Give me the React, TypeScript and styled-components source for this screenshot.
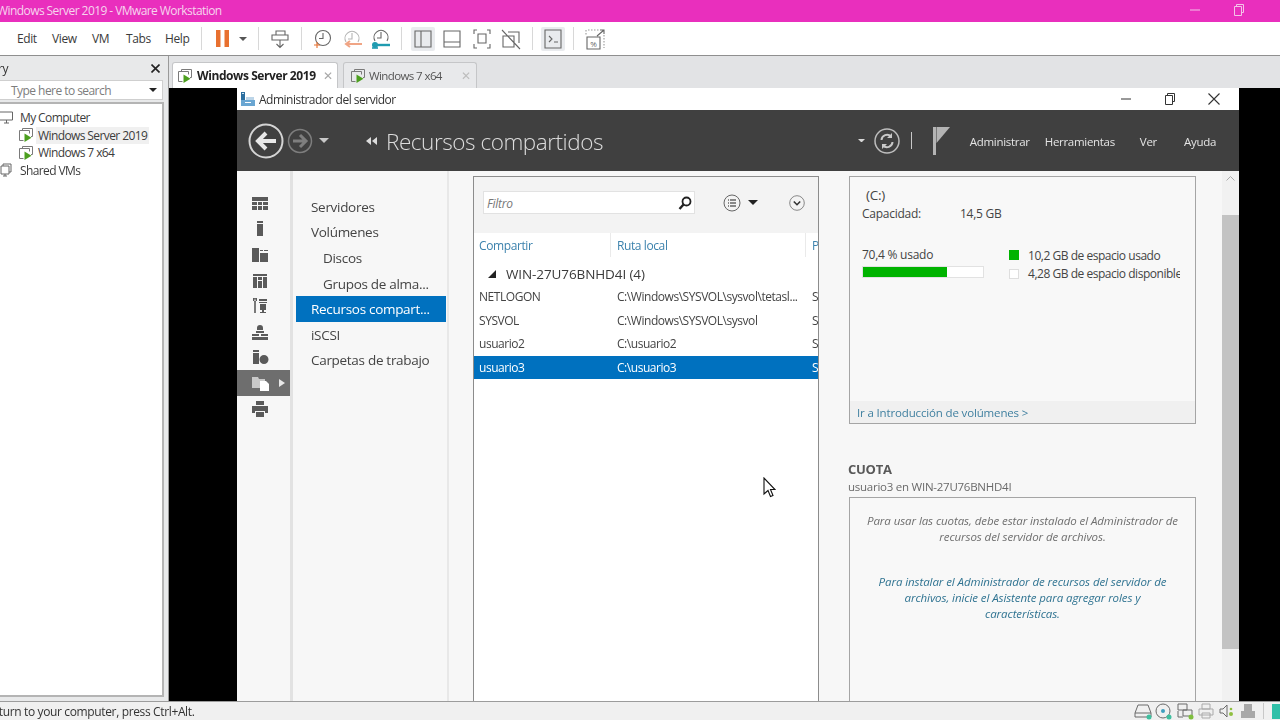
import React from "react";
import styled, { createGlobalStyle } from "styled-components";

const GlobalStyle = createGlobalStyle`
  html, body {
    margin: 0;
    padding: 0;
    width: 1280px;
    height: 720px;
    overflow: hidden;
    background: #000;
  }
  * {
    box-sizing: border-box;
  }
`;

const uiFont = `"Open Sans", "Noto Sans", sans-serif`;

const Screen = styled.div`
  position: relative;
  width: 1280px;
  height: 720px;
  display: flex;
  flex-direction: column;
  overflow: hidden;
  font-family: ${uiFont};
  letter-spacing: -0.25px;
  color: #333;
  filter: blur(0.3px);
`;

/* host window chrome */
const TitleBar = styled.div`
  height: 22px;
  flex-shrink: 0;
  background: #e92fbd;
  display: flex;
  align-items: center;
  color: #f6d5ee;
  font-size: 12px;
  letter-spacing: -0.57px;
  padding-bottom: 2px;
`;

const TitleText = styled.span`
  margin-left: -3px;
  flex: 1;
`;

const TitleControl = styled.span<{ $w: number }>`
  width: ${(p) => p.$w}px;
  display: flex;
  justify-content: center;
`;

const MenuBar = styled.div`
  height: 34px;
  flex-shrink: 0;
  background: #fff;
  border-bottom: 1px solid #8f8f8f;
  display: flex;
  align-items: center;
  padding-left: 17px;
  font-size: 12px;
  letter-spacing: -0.4px;
  color: #3a3a3a;
`;

const MenuItem = styled.span<{ $w: number }>`
  width: ${(p) => p.$w}px;
  flex-shrink: 0;
`;

const Sep = styled.span<{ $ml: number }>`
  width: 1px;
  height: 23px;
  background: #d8d8d8;
  margin-left: ${(p) => p.$ml}px;
  flex-shrink: 0;
`;

const Tool = styled.span<{ $ml: number; $w?: number; $on?: boolean }>`
  width: ${(p) => p.$w ?? 24}px;
  height: 24px;
  margin-left: ${(p) => p.$ml}px;
  flex-shrink: 0;
  display: flex;
  align-items: center;
  justify-content: center;
  border-radius: 2px;
  background: ${(p) => (p.$on ? "#e9ebee" : "transparent")};
`;

const Main = styled.div`
  flex: 1;
  min-height: 0;
  display: flex;
`;

const Library = styled.aside`
  width: 168px;
  flex-shrink: 0;
  background: #e8e9ea;
  display: flex;
  flex-direction: column;
`;

const LibraryHead = styled.div`
  height: 24px;
  display: flex;
  align-items: center;
  justify-content: space-between;
  padding-right: 8px;
  font-size: 12px;
`;

const LibraryTitle = styled.span`
  margin-left: -29px;
`;

const SearchBox = styled.div`
  height: 20px;
  width: 163px;
  background: #fff;
  border: 1px solid #cfcfcf;
  border-left: 0;
  display: flex;
  align-items: center;
  justify-content: space-between;
  padding: 0 5px 0 11px;
  font-size: 12px;
  letter-spacing: -0.55px;
  color: #7d7d7d;
`;

const Tree = styled.div`
  margin-top: 2px;
  width: 164px;
  height: 595px;
  background: #fff;
  border: 2px solid #b4b4b4;
  border-left: 0;
  padding-top: 5px;
`;

const TreeRow = styled.div<{ $child?: boolean }>`
  height: 17.5px;
  display: flex;
  align-items: center;
  gap: ${(p) => (p.$child ? 3 : 4)}px;
  padding-left: ${(p) => (p.$child ? 19 : 0)}px;
  font-size: 12px;
  letter-spacing: -0.6px;
  color: #3c3c3c;
`;

const TreeLabel = styled.span<{ $hover?: boolean }>`
  padding: 0 2px;
  line-height: 17px;
  background: ${(p) => (p.$hover ? "#f0f0f0" : "transparent")};
`;

const VmArea = styled.section`
  flex: 1;
  min-width: 0;
  display: flex;
  flex-direction: column;
  border-left: 1px solid #9a9a9a;
`;

const TabStrip = styled.div`
  height: 32px;
  flex-shrink: 0;
  background: #e2e3e5;
  display: flex;
  align-items: flex-end;
  padding-left: 3px;
  gap: 5px;
`;

const Tab = styled.div<{ $active?: boolean }>`
  width: ${(p) => (p.$active ? 166 : 134)}px;
  height: 26px;
  display: flex;
  align-items: center;
  padding: ${(p) => (p.$active ? "0 4px 0 5px" : "0 6px 0 7px")};
  gap: ${(p) => (p.$active ? 5 : 4)}px;
  font-size: ${(p) => (p.$active ? 12 : 11.5)}px;
  letter-spacing: ${(p) => (p.$active ? -0.42 : -0.6)}px;
  font-weight: ${(p) => (p.$active ? 700 : 400)};
  color: ${(p) => (p.$active ? "#222" : "#555")};
  background: ${(p) => (p.$active ? "#fff" : "#e8e9eb")};
  border: 1px solid #c5c6c8;
  border-bottom: 0;
  border-radius: 3px 3px 0 0;
`;

const TabLabel = styled.span`
  flex: 1;
  white-space: nowrap;
`;

const TabClose = styled.span<{ $active?: boolean }>`
  font-size: 12px;
  font-weight: 400;
  color: ${(p) => (p.$active ? "#a8a8a8" : "#bdbdbd")};
`;

const VmScreen = styled.div`
  flex: 1;
  min-height: 0;
  background: #000;
  padding: 0 41px 0 68px;
  display: flex;
`;

/* guest window */
const Guest = styled.div`
  flex: 1;
  min-width: 0;
  display: flex;
  flex-direction: column;
  background: #f7f7f7;
  overflow: hidden;
`;

const GuestTitle = styled.div`
  height: 22px;
  flex-shrink: 0;
  background: #fff;
  display: flex;
  align-items: center;
  padding: 0 3px;
  font-size: 12px;
  letter-spacing: -0.5px;
  color: #333;
`;

const GuestTitleText = styled.span`
  flex: 1;
  margin-left: 3px;
`;

const GuestControl = styled.span`
  width: 44px;
  display: flex;
  justify-content: center;
`;

const GuestHeader = styled.header`
  height: 61px;
  flex-shrink: 0;
  background: #404040;
  display: flex;
  align-items: center;
  padding-left: 11px;
  color: #e4e4e4;
  font-size: 11.5px;
  letter-spacing: -0.3px;
`;

const Spacer = styled.span<{ $w: number }>`
  width: ${(p) => p.$w}px;
  flex-shrink: 0;
`;

const HeaderDivider = styled.span`
  width: 1px;
  height: 17px;
  background: #c8c8c8;
`;

const PageTitle = styled.h1`
  margin: 2px 0 0 8px;
  flex: 1;
  font-size: 22.5px;
  font-weight: 300;
  letter-spacing: -0.45px;
  color: #dcdcdc;
  white-space: nowrap;
`;

const HeaderMenu = styled.span<{ $ml: number }>`
  margin-left: ${(p) => p.$ml}px;
  margin-top: 1px;
  flex-shrink: 0;
`;

const GuestBody = styled.div`
  flex: 1;
  min-height: 0;
  display: flex;
`;

const Rail = styled.nav`
  width: 53px;
  flex-shrink: 0;
  padding-top: 20px;
  display: flex;
  flex-direction: column;
`;

const RailItem = styled.div<{ $active?: boolean }>`
  height: 25.6px;
  display: flex;
  align-items: center;
  padding-left: 14px;
  background: ${(p) => (p.$active ? "#6e6e6e" : "transparent")};
`;

const RailArrow = styled.span`
  margin-left: 10px;
  width: 0;
  height: 0;
  border-left: 6px solid #e8e8e8;
  border-top: 4px solid transparent;
  border-bottom: 4px solid transparent;
`;

const NavPane = styled.nav`
  width: 159px;
  flex-shrink: 0;
  border-left: 3px solid #e2e2e2;
  border-right: 2px solid #e8e8e8;
  padding-top: 23px;
  font-size: 13.5px;
  letter-spacing: -0.3px;
  color: #444;
`;

const NavItem = styled.div<{ $sub?: boolean; $active?: boolean }>`
  height: 25.6px;
  width: 150px;
  margin-left: 3px;
  display: flex;
  align-items: center;
  padding-left: ${(p) => (p.$sub ? 27 : 15)}px;
  white-space: nowrap;
  color: ${(p) => (p.$active ? "#fff" : "#444")};
  background: ${(p) => (p.$active ? "#0071bf" : "transparent")};
`;

const Content = styled.div`
  flex: 1;
  min-width: 0;
  display: flex;
  padding: 5px 0 0 24px;
`;

const ListPanel = styled.section`
  width: 346px;
  flex-shrink: 0;
  background: #fff;
  border: 1px solid #8c8c8c;
  border-bottom: 0;
  overflow: hidden;
  display: flex;
  flex-direction: column;
`;

const ListToolbar = styled.div`
  height: 56px;
  flex-shrink: 0;
  background: #f3f3f3;
  display: flex;
  padding: 14px 0 0 9px;
`;

const FilterBox = styled.div`
  width: 212px;
  height: 23px;
  background: #fff;
  border: 1px solid #e2e2e2;
  display: flex;
  align-items: center;
  justify-content: space-between;
  padding: 1px 1px 0 3px;
  font-size: 12px;
  font-style: italic;
  color: #777;
`;

const ToolbarIcons = styled.div`
  display: flex;
  align-items: center;
  height: 23px;
  margin-left: 28px;
  gap: 7px;
`;

const Columns = styled.div`
  display: grid;
  grid-template-columns: 136px 195px 20px;
  width: 352px;
  height: 24px;
  align-items: center;
  font-size: 12px;
  letter-spacing: -0.4px;
  color: #3c82ad;
`;

const ColumnHead = styled.span<{ $line?: boolean }>`
  height: 100%;
  display: flex;
  align-items: center;
  padding-left: ${(p) => (p.$line ? 7 : 5)}px;
  white-space: nowrap;
  box-shadow: ${(p) => (p.$line ? "inset 1px 0 0 #eaeaea" : "none")};
`;

const GroupRow = styled.div`
  height: 22px;
  margin-top: 6px;
  flex-shrink: 0;
  display: flex;
  align-items: center;
  padding-left: 14px;
  gap: 10px;
  font-size: 13.5px;
  letter-spacing: -0.1px;
  color: #3a3a3a;
`;

const ShareRow = styled.div<{ $active?: boolean }>`
  display: grid;
  grid-template-columns: 136px 195px 20px;
  width: 345px;
  height: 23.6px;
  flex-shrink: 0;
  align-items: center;
  font-size: 12px;
  letter-spacing: -0.45px;
  white-space: nowrap;
  overflow: hidden;
  color: ${(p) => (p.$active ? "#fff" : "#444")};
  background: ${(p) => (p.$active ? "#0071bf" : "transparent")};
`;

const ShareCell = styled.span<{ $first?: boolean }>`
  padding-left: ${(p) => (p.$first ? 5 : 7)}px;
  overflow: hidden;
`;

const SideColumn = styled.div`
  width: 347px;
  margin-left: 30px;
  flex-shrink: 0;
  display: flex;
  flex-direction: column;
`;

const Card = styled.section`
  height: 248px;
  flex-shrink: 0;
  border: 1px solid #a5a5a5;
  background: #f8f8f8;
  display: flex;
  flex-direction: column;
  font-size: 12px;
  color: #444;
`;

const CardBody = styled.div`
  flex: 1;
  padding: 9px 12px 0;
`;

const DriveName = styled.div`
  font-size: 13.5px;
  line-height: 18px;
  padding-left: 4px;
`;

const CapacityRow = styled.div`
  display: flex;
  line-height: 18px;
  margin-top: 1px;
`;

const CapacityLabel = styled.span`
  width: 98px;
`;

const Usage = styled.div`
  display: flex;
  margin-top: 23px;
`;

const UsageLeft = styled.div`
  width: 147px;
`;

const UsageText = styled.div`
  line-height: 17px;
`;

const UsageTrack = styled.div`
  width: 122px;
  height: 12px;
  margin-top: 3px;
  background: #fff;
  border: 1px solid #e2e2e2;
`;

const UsageFill = styled.div`
  height: 100%;
  background: #00b300;
`;

const Legend = styled.div`
  width: 171px;
  overflow: hidden;
`;

const LegendRow = styled.div`
  height: 18.5px;
  display: flex;
  align-items: center;
  gap: 9px;
  letter-spacing: -0.47px;
  white-space: nowrap;
`;

const Swatch = styled.span<{ $fill?: boolean }>`
  width: 10px;
  height: 10px;
  flex-shrink: 0;
  background: ${(p) => (p.$fill ? "#00b300" : "#fff")};
  border: 1px solid ${(p) => (p.$fill ? "#00b300" : "#dedede")};
`;

const CardFooter = styled.div`
  height: 22px;
  flex-shrink: 0;
  background: #f0f0f0;
  display: flex;
  align-items: center;
  padding-left: 7px;
  font-size: 11.5px;
  letter-spacing: -0.15px;
  color: #3f7f9f;
`;

const QuotaHead = styled.h2`
  margin: 36px 0 0 -1px;
  font-size: 13px;
  line-height: 18px;
  font-weight: 700;
  color: #595959;
`;

const QuotaSub = styled.div`
  margin-left: -1px;
  font-size: 11.5px;
  line-height: 17px;
  color: #6a6a6a;
`;

const QuotaCard = styled.section`
  flex: 1;
  margin-top: 2px;
  border: 1px solid #a5a5a5;
  border-bottom: 0;
  background: #f8f8f8;
  padding-top: 15px;
  text-align: center;
  font-size: 11.5px;
  font-style: italic;
  letter-spacing: -0.08px;
  line-height: 16px;
`;

const QuotaNote = styled.p`
  margin: 0;
  color: #6f6f6f;
`;

const QuotaLink = styled.p`
  margin: 29px 0 0;
  color: #2f7391;
`;

const Scrollbar = styled.div`
  width: 17px;
  margin-left: 26px;
  flex-shrink: 0;
  margin-top: -5px;
  background: #f1f1f1;
  display: flex;
  flex-direction: column;
  align-items: center;
  padding-top: 5px;
`;

const ScrollThumb = styled.div`
  width: 17px;
  height: 434px;
  margin-top: 34px;
  background: #c3c3c3;
`;

const StatusBar = styled.footer`
  height: 19px;
  flex-shrink: 0;
  background: #f0f0f0;
  border-top: 1px solid #9c9c9c;
  display: flex;
  align-items: center;
  font-size: 12px;
  letter-spacing: -0.36px;
  color: #333;
`;

const StatusText = styled.span`
  flex: 1;
  margin: 1px 0 0 -28px;
  white-space: nowrap;
`;

const StatusDivider = styled.span`
  width: 1px;
  height: 16px;
  background: #c8c8c8;
  margin: 0 8px 0 5px;
`;

const StatusChip = styled.span`
  width: 8px;
  height: 15px;
  background: #30c0a8;
`;

const Cursor = styled.svg`
  position: absolute;
  left: 763px;
  top: 477px;
`;

/* icons */
const Ico = ({ children }: { children: React.ReactNode }) => (
  <svg width="24" height="24" viewBox="0 0 24 24" fill="none" stroke="#666" strokeWidth="1.1">
    {children}
  </svg>
);

const VmIcon = () => (
  <svg width="14" height="14" viewBox="0 0 14 14" fill="none" style={{ flexShrink: 0 }}>
    <path d="M3.5 2.5V.5h10v8H12" stroke="#7a7a7a" />
    <path d="M4.5 12.5h-4v-10h10v3" stroke="#7a7a7a" />
    <path d="M5.5 5.5v8.5l7-4.2z" fill="#4c9f1f" />
  </svg>
);

const Caret = ({ color = "#555", size = 4 }: { color?: string; size?: number }) => (
  <svg width={size * 2} height={size} viewBox="0 0 8 4">
    <path d="M0 0h8L4 4z" fill={color} />
  </svg>
);

const RailGlyph = ({ d }: { d: string }) => (
  <svg width="18" height="18" viewBox="0 0 18 18">
    <path d={d} fill="#5a5a5a" fillRule="evenodd" />
  </svg>
);

const railIcons = [
  "M1 2h16v4H1zM1 7h5v3H1zM7 7h4v3H7zM12 7h5v3h-5zM1 11h5v4H1zM7 11h4v4H7zM12 11h5v4h-5z",
  "M6 1h6v2H6zM6 4h6v12H6z",
  "M1 2h7v14H1zM9 4h3v1H9zM13 4h4v1h-4zM9 7h8v9H9z",
  "M2 2h14v2H2zM2 5h4v11H2zM12 5h4v11h-4zM7 5h4v3H7zM7 9h4v7H7z",
  "M4 1l1 4h-.2v11H3.2V5H3zM2 1v3h4V1zM8 2h8v2H8zM8 5h8v1H8zM9 7h6v6H9zM11 13h2v2h2v1H9v-1h2z",
  "M6 5a3 3 0 0 1 6 0v2H6zM5 8h8v2H5zM1 11h7v2H1zM10 11h7v2h-7zM1 14h16v3H1z",
  "M2 2h6v2H2zM2 5h6v11H2zM13 7a4.5 4.5 0 1 1 0 9 4.5 4.5 0 0 1 0-9z",
  "",
  "M5 1h8v4H5zM1 6h16v7h-3v-2H4v2H1zM5 12h8v5H5z",
];

const NavBack = () => (
  <svg width="36" height="36" viewBox="0 0 36 36">
    <circle cx="18" cy="18" r="16.5" fill="none" stroke="#d4d4d4" strokeWidth="2" />
    <path d="M28 18H11M18 10l-8 8 8 8" fill="none" stroke="#e8e8e8" strokeWidth="4" />
  </svg>
);

const NavForward = () => (
  <svg width="26" height="26" viewBox="0 0 26 26">
    <circle cx="13" cy="13" r="11.5" fill="none" stroke="#7e7e7e" strokeWidth="1.5" />
    <path d="M6 13h13M13 7l6 6-6 6" fill="none" stroke="#7e7e7e" strokeWidth="3" />
  </svg>
);

const Refresh = () => (
  <svg width="26" height="26" viewBox="0 0 26 26">
    <circle cx="13" cy="13" r="12" fill="none" stroke="#bdbdbd" strokeWidth="1.5" />
    <path
      d="M7.5 12a5.5 5.5 0 0 1 9.5-3.5M18.5 14a5.5 5.5 0 0 1-9.5 3.5"
      fill="none"
      stroke="#c9c9c9"
      strokeWidth="2"
    />
    <path d="M18 5v5h-5zM8 21v-5h5z" fill="#c9c9c9" />
  </svg>
);

const Flag = () => (
  <svg width="17" height="29" viewBox="0 0 17 29">
    <path d="M0 1h3v28H0z" fill="#b4b4b4" />
    <path d="M3.5 1H17L3.5 17z" fill="#b4b4b4" />
  </svg>
);

const ServerManagerIcon = () => (
  <svg width="16" height="16" viewBox="0 0 16 16">
    <path d="M1 1h4v8H1z" fill="#2d6f9f" />
    <path d="M2 2h2v1H2z" fill="#cfe3f2" />
    <path d="M1 9h14v6H1z" fill="#6aa6d2" />
    <path d="M6 6h8v3H6z" fill="#bcd5e8" />
    <path d="M5 11h6v1H5z" fill="#fff" />
  </svg>
);

const Restore = ({ color }: { color: string }) => (
  <svg width="12" height="12" viewBox="0 0 12 12" fill="none" stroke={color}>
    <path d="M3.5 2.5V.5h7v8h-2" />
    <path d="M1.5 2.5h7v9h-7z" />
  </svg>
);

const Cross = () => (
  <svg width="12" height="12" viewBox="0 0 12 12" stroke="#333" strokeWidth="1.1">
    <path d="M.5.5l11 11M11.5.5l-11 11" />
  </svg>
);

const Dash = ({ color }: { color: string }) => (
  <svg width="10" height="2" viewBox="0 0 10 2">
    <path d="M0 1h10" stroke={color} strokeWidth="1" />
  </svg>
);

const Magnifier = () => (
  <svg width="16" height="16" viewBox="0 0 16 16" fill="none" stroke="#222" strokeWidth="1.8">
    <circle cx="9.5" cy="6.5" r="4" />
    <path d="M6.5 9.5L2.5 14" strokeWidth="2.4" />
  </svg>
);

const ListOptions = () => (
  <svg width="18" height="18" viewBox="0 0 18 18" fill="none" stroke="#666">
    <circle cx="9" cy="9" r="8" />
    <path d="M7 6h6M7 9h6M7 12h6M5 6h1M5 9h1M5 12h1" strokeWidth="1.4" />
  </svg>
);

const Expand = () => (
  <svg width="16" height="16" viewBox="0 0 16 16" fill="none">
    <circle cx="8" cy="8" r="7.3" stroke="#888" />
    <path d="M4.8 6.5L8 9.7l3.2-3.2" stroke="#333" strokeWidth="1.6" />
  </svg>
);

const StatusIcon = ({ children }: { children: React.ReactNode }) => (
  <svg width="20" height="18" viewBox="0 0 20 18" fill="none" stroke="#6a6a6a" style={{ marginLeft: 1 }}>
    {children}
  </svg>
);

const shares = [
  { name: "NETLOGON", path: "C:\\Windows\\SYSVOL\\sysvol\\tetasl...", active: false },
  { name: "SYSVOL", path: "C:\\Windows\\SYSVOL\\sysvol", active: false },
  { name: "usuario2", path: "C:\\usuario2", active: false },
  { name: "usuario3", path: "C:\\usuario3", active: true },
];

const navItems = [
  { label: "Servidores" },
  { label: "Volúmenes" },
  { label: "Discos", sub: true },
  { label: "Grupos de alma...", sub: true },
  { label: "Recursos compart...", active: true },
  { label: "iSCSI" },
  { label: "Carpetas de trabajo" },
];

export default function App() {
  return (
    <Screen>
      <GlobalStyle />
      <TitleBar>
        <TitleText>Windows Server 2019 - VMware Workstation</TitleText>
        <TitleControl $w={44}>
          <Dash color="#f3c4e8" />
        </TitleControl>
        <TitleControl $w={44}>
          <Restore color="#f3c4e8" />
        </TitleControl>
        <TitleControl $w={19} />
      </TitleBar>

      <MenuBar>
        <MenuItem $w={35}>Edit</MenuItem>
        <MenuItem $w={40}>View</MenuItem>
        <MenuItem $w={34}>VM</MenuItem>
        <MenuItem $w={39}>Tabs</MenuItem>
        <MenuItem $w={36}>Help</MenuItem>
        <Sep $ml={0} />
        <Tool $ml={8}>
          <svg width="13" height="17" viewBox="0 0 13 17">
            <path d="M0 0h4.5v17H0zM8.5 0H13v17H8.5z" fill="#e8702f" />
          </svg>
        </Tool>
        <Tool $ml={4} $w={10}>
          <Caret />
        </Tool>
        <Sep $ml={10} />
        <Tool $ml={9}>
          <Ico>
            <path d="M8 4h9v4H8zM4 8h16v5H4zM12 13v7M8.5 17l3.5 3.5 3.5-3.5" />
          </Ico>
        </Tool>
        <Sep $ml={9} />
        <Tool $ml={8}>
          <Ico>
            <circle cx="13" cy="11" r="7.5" />
            <path d="M13 6v5.5H9" />
            <path d="M7 15v6M4 18h6" stroke="#e8702f" />
          </Ico>
        </Tool>
        <Tool $ml={6}>
          <Ico>
            <path d="M6 15a7 7 0 1 1 12 0" stroke="#b5b5b5" />
            <path d="M12 6v6H8" stroke="#b5b5b5" />
            <path d="M22 17H6M10 14l-4 3 4 3" stroke="#f0a585" strokeWidth="2" />
          </Ico>
        </Tool>
        <Tool $ml={5}>
          <Ico>
            <path d="M6 14a7 7 0 1 1 12 0" />
            <path d="M12 5v6H8" />
            <path d="M8 18h13" stroke="#1f9bb0" strokeWidth="2.4" />
            <circle cx="6" cy="18" r="3" fill="#1f9bb0" stroke="none" />
            <path d="M3 21h6" stroke="#1f9bb0" strokeWidth="1.6" />
          </Ico>
        </Tool>
        <Sep $ml={8} />
        <Tool $ml={9} $on>
          <Ico>
            <path d="M4 4h16v16H4zM10 4v16" />
          </Ico>
        </Tool>
        <Tool $ml={5}>
          <Ico>
            <path d="M4 4h16v16H4zM4 15h16" />
          </Ico>
        </Tool>
        <Tool $ml={6}>
          <Ico>
            <path d="M8 7h8v9H8zM7 3H4v4M17 3h3v4M7 21H4v-4M17 21h3v-4" />
          </Ico>
        </Tool>
        <Tool $ml={5}>
          <Ico>
            <path d="M9 5h11v11M4 9v11h11V9zM3 3l18 19" />
          </Ico>
        </Tool>
        <Sep $ml={9} />
        <Tool $ml={8} $on>
          <Ico>
            <path d="M4 3h16v18H4zM8 9l3 3-3 3M13 15h4" />
          </Ico>
        </Tool>
        <Sep $ml={8} />
        <Tool $ml={9}>
          <Ico>
            <path d="M5 3h11M21 8v13M3 3v5" strokeDasharray="1.5 1.5" stroke="#999" />
            <path d="M4 10h13v12H4zM14 9l7-6M17 3h4v4" />
            <text x="10.5" y="19.5" fontSize="8" textAnchor="middle" fill="#666" stroke="none" letterSpacing="0">
              %
            </text>
          </Ico>
        </Tool>
      </MenuBar>

      <Main>
        <Library>
          <LibraryHead>
            <LibraryTitle>Library</LibraryTitle>
            <svg width="9" height="9" viewBox="0 0 9 9" stroke="#222" strokeWidth="1.6">
              <path d="M.5.5l8 8M8.5.5l-8 8" />
            </svg>
          </LibraryHead>
          <SearchBox>
            <span>Type here to search</span>
            <Caret color="#222" />
          </SearchBox>
          <Tree>
            <TreeRow>
              <svg width="15" height="13" viewBox="0 0 15 13" fill="none" stroke="#666" style={{ marginLeft: -1 }}>
                <path d="M.5 1h13v8H.5zM5 12h5M7.5 9v3" />
              </svg>
              <TreeLabel>My Computer</TreeLabel>
            </TreeRow>
            <TreeRow $child>
              <VmIcon />
              <TreeLabel $hover>Windows Server 2019</TreeLabel>
            </TreeRow>
            <TreeRow $child>
              <VmIcon />
              <TreeLabel>Windows 7 x64</TreeLabel>
            </TreeRow>
            <TreeRow>
              <svg width="14" height="14" viewBox="0 0 14 14" fill="none" stroke="#666">
                <path d="M3 3V1h8v8H9M1 3h8v8H1zM3 13h4M5 11v2" />
              </svg>
              <TreeLabel>Shared VMs</TreeLabel>
            </TreeRow>
          </Tree>
        </Library>

        <VmArea>
          <TabStrip>
            <Tab $active>
              <VmIcon />
              <TabLabel>Windows Server 2019</TabLabel>
              <TabClose $active>✕</TabClose>
            </Tab>
            <Tab>
              <VmIcon />
              <TabLabel>Windows 7 x64</TabLabel>
              <TabClose>✕</TabClose>
            </Tab>
          </TabStrip>

          <VmScreen>
            <Guest>
              <GuestTitle>
                <ServerManagerIcon />
                <GuestTitleText>Administrador del servidor</GuestTitleText>
                <GuestControl>
                  <Dash color="#333" />
                </GuestControl>
                <GuestControl>
                  <Restore color="#333" />
                </GuestControl>
                <GuestControl>
                  <Cross />
                </GuestControl>
              </GuestTitle>

              <GuestHeader>
                <NavBack />
                <Spacer $w={3} />
                <NavForward />
                <Spacer $w={6} />
                <Caret color="#c8c8c8" size={5} />
                <Spacer $w={37} />
                <svg width="12" height="8" viewBox="0 0 12 8">
                  <path d="M5 0v8L0 4zM11 0v8L6 4z" fill="#dcdcdc" />
                </svg>
                <PageTitle>Recursos compartidos</PageTitle>
                <Caret color="#d8d8d8" size={3.5} />
                <Spacer $w={9} />
                <Refresh />
                <Spacer $w={11} />
                <HeaderDivider />
                <Spacer $w={21} />
                <Flag />
                <HeaderMenu $ml={20}>Administrar</HeaderMenu>
                <HeaderMenu $ml={15}>Herramientas</HeaderMenu>
                <HeaderMenu $ml={25}>Ver</HeaderMenu>
                <HeaderMenu $ml={27}>Ayuda</HeaderMenu>
                <Spacer $w={23} />
              </GuestHeader>

              <GuestBody>
                <Rail>
                  {railIcons.map((d, i) =>
                    d ? (
                      <RailItem key={i}>
                        <RailGlyph d={d} />
                      </RailItem>
                    ) : (
                      <RailItem key={i} $active>
                        <svg width="18" height="18" viewBox="0 0 18 18">
                          <path d="M1 3h6l1 2h6v9H1z" fill="#c9c9c9" />
                          <path d="M9 7h6l3 3v7H9z" fill="#fff" />
                        </svg>
                        <RailArrow />
                      </RailItem>
                    ),
                  )}
                </Rail>

                <NavPane>
                  {navItems.map((n) => (
                    <NavItem key={n.label} $sub={n.sub} $active={n.active}>
                      {n.label}
                    </NavItem>
                  ))}
                </NavPane>

                <Content>
                  <ListPanel>
                    <ListToolbar>
                      <FilterBox>
                        <span>Filtro</span>
                        <Magnifier />
                      </FilterBox>
                      <ToolbarIcons>
                        <ListOptions />
                        <Caret color="#222" size={5} />
                        <Spacer $w={17} />
                        <Expand />
                      </ToolbarIcons>
                    </ListToolbar>
                    <Columns>
                      <ColumnHead>Compartir</ColumnHead>
                      <ColumnHead $line>Ruta local</ColumnHead>
                      <ColumnHead $line>P</ColumnHead>
                    </Columns>
                    <GroupRow>
                      <svg width="8" height="8" viewBox="0 0 8 8">
                        <path d="M8 0v8H0z" fill="#222" />
                      </svg>
                      <span>WIN-27U76BNHD4I (4)</span>
                    </GroupRow>
                    {shares.map((s) => (
                      <ShareRow key={s.name} $active={s.active}>
                        <ShareCell $first>{s.name}</ShareCell>
                        <ShareCell>{s.path}</ShareCell>
                        <ShareCell>S</ShareCell>
                      </ShareRow>
                    ))}
                  </ListPanel>

                  <SideColumn>
                    <Card>
                      <CardBody>
                        <DriveName>(C:)</DriveName>
                        <CapacityRow>
                          <CapacityLabel>Capacidad:</CapacityLabel>
                          <span>14,5 GB</span>
                        </CapacityRow>
                        <Usage>
                          <UsageLeft>
                            <UsageText>70,4 % usado</UsageText>
                            <UsageTrack>
                              <UsageFill style={{ width: "70.4%" }} />
                            </UsageTrack>
                          </UsageLeft>
                          <Legend>
                            <LegendRow>
                              <Swatch $fill />
                              <span>10,2 GB de espacio usado</span>
                            </LegendRow>
                            <LegendRow>
                              <Swatch />
                              <span>4,28 GB de espacio disponible</span>
                            </LegendRow>
                          </Legend>
                        </Usage>
                      </CardBody>
                      <CardFooter>Ir a Introducción de volúmenes &gt;</CardFooter>
                    </Card>
                    <QuotaHead>CUOTA</QuotaHead>
                    <QuotaSub>usuario3 en WIN-27U76BNHD4I</QuotaSub>
                    <QuotaCard>
                      <QuotaNote>
                        Para usar las cuotas, debe estar instalado el Administrador de
                        <br />
                        recursos del servidor de archivos.
                      </QuotaNote>
                      <QuotaLink>
                        Para instalar el Administrador de recursos del servidor de
                        <br />
                        archivos, inicie el Asistente para agregar roles y
                        <br />
                        características.
                      </QuotaLink>
                    </QuotaCard>
                  </SideColumn>

                  <Scrollbar>
                    <svg width="9" height="5" viewBox="0 0 9 5" fill="none" stroke="#aaa">
                      <path d="M.5 4.5l4-4 4 4" />
                    </svg>
                    <ScrollThumb />
                  </Scrollbar>
                </Content>
              </GuestBody>
            </Guest>
          </VmScreen>
        </VmArea>
      </Main>

      <StatusBar>
        <StatusText>To return to your computer, press Ctrl+Alt.</StatusText>
        <StatusIcon>
          <path d="M2 11L5 3h10l3 8v4H2zM2 11h16" />
          <circle cx="16" cy="15" r="2.5" fill="#3fbf9f" stroke="none" />
        </StatusIcon>
        <StatusIcon>
          <circle cx="9" cy="9" r="7" />
          <circle cx="9" cy="9" r="2" fill="#3f9fbf" stroke="none" />
          <circle cx="15" cy="15" r="2.5" fill="#3fbf9f" stroke="none" />
        </StatusIcon>
        <StatusIcon>
          <path d="M3 2h9v6H3zM8 8h9v6H8zM3 9v6h5" />
          <circle cx="16" cy="15" r="2.5" fill="#7fbf3f" stroke="none" />
        </StatusIcon>
        <StatusIcon>
          <path d="M6 2h8v5H6zM3 7h14v6H3zM6 11h8v5H6z" stroke="#aaa" />
        </StatusIcon>
        <StatusIcon>
          <path d="M3 7h3l4-4v12l-4-4H3z" />
          <circle cx="14" cy="12" r="2" fill="#8fbf3f" stroke="none" />
          <circle cx="14" cy="7" r="1.3" fill="#8fbf3f" stroke="none" />
        </StatusIcon>
        <StatusIcon>
          <path d="M6 2h8v7H6zM3 9h14v7H3z" fill="#a8a8a8" stroke="none" />
        </StatusIcon>
        <StatusDivider />
        <StatusChip />
      </StatusBar>

      <Cursor width="13" height="21" viewBox="0 0 13 21">
        <path d="M1 1v16l4-3.5 2.5 6 2.5-1-2.5-6H12z" fill="#fff" stroke="#111" strokeWidth="1.1" />
      </Cursor>
    </Screen>
  );
}
